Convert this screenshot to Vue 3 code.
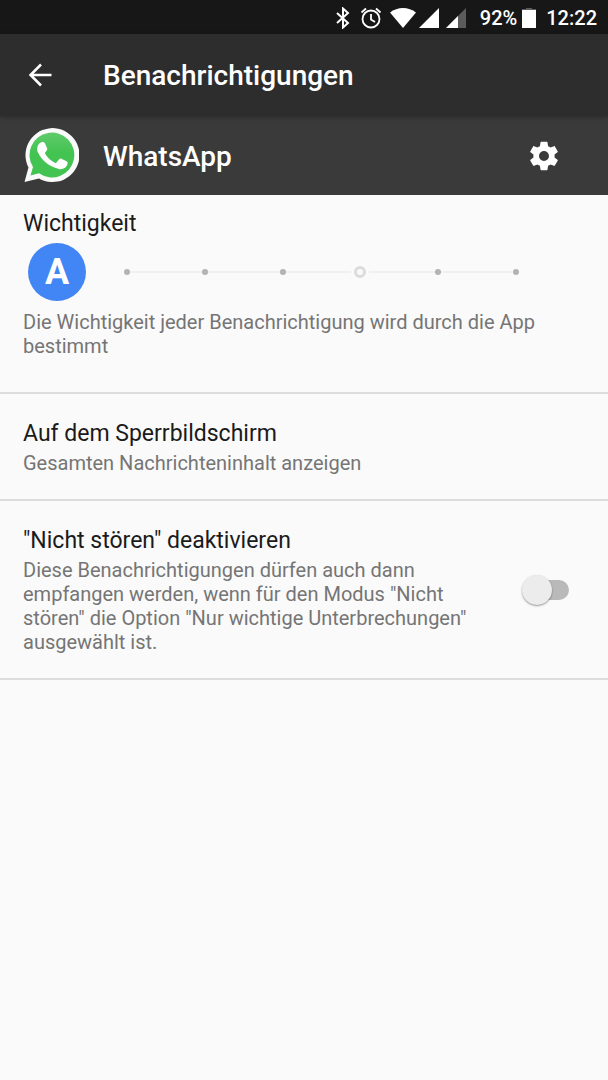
<script setup>
import { ref } from 'vue'

const importance = ref(3)
const overrideDnd = ref(false)
</script>

<template>
  <div class="screen">
    <div class="status">
      <svg class="bluetooth" width="14" height="22" viewBox="0 0 14 22" fill="none" stroke="#fff" stroke-width="2" aria-label="Bluetooth">
        <path d="M1 6l11 10-5 4.500V1.500l5 4.500L1 16" />
      </svg>
      <svg class="alarm" width="22" height="22" viewBox="0 0 22 22" fill="none" stroke="#fff" stroke-width="1.800" aria-label="Wecker">
        <circle cx="11" cy="12" r="8.500" />
        <path d="M11 7v5.500l4 2.500M1.500 5.500l4.500-4M20.500 5.500l-4.500-4" />
      </svg>
      <svg class="wifi" width="26" height="20" viewBox="0 0 26 20" fill="#fff" aria-label="WLAN">
        <path d="M0 4.500C7.500-1.500 18.500-1.500 26 4.500L13 20z" />
      </svg>
      <svg class="signal" width="20" height="20" viewBox="0 0 20 20" aria-label="Mobilfunk 1">
        <path d="M20 0v20H0z" fill="#fff" />
      </svg>
      <svg class="signal second" width="20" height="20" viewBox="0 0 20 20" aria-label="Mobilfunk 2">
        <path d="M20 0v20H0z" fill="#5b5b5b" />
        <path d="M12 8v12H0z" fill="#fff" />
      </svg>
      <span>92%</span>
      <svg class="battery" width="14" height="20" viewBox="0 0 14 20" aria-label="Akku">
        <path d="M4 0h6v1h4v3H0V1h4z" fill="#5b5b5b" />
        <path d="M0 2h14v18H0z" fill="#fff" />
      </svg>
      <time>12:22</time>
    </div>

    <header class="toolbar">
      <button class="icon-button back" type="button" aria-label="Zurück">
        <svg width="24" height="24" viewBox="0 0 24 24" fill="none" stroke="#fff" stroke-width="2.500">
          <path d="M23.500 12H3M13 1.500L2.500 12 13 22.500" />
        </svg>
      </button>
      <h1>Benachrichtigungen</h1>
    </header>

    <div class="app-row">
      <svg class="logo" width="56" height="56" viewBox="0 0 56 56" aria-hidden="true">
        <defs>
          <linearGradient id="leaf" x1="0" y1="0" x2="0" y2="1">
            <stop offset="0" stop-color="#5fca6b" />
            <stop offset="0.450" stop-color="#43c351" />
            <stop offset="1" stop-color="#43c351" />
          </linearGradient>
        </defs>
        <path d="M1.500 55l4-14.500A27 27 0 1 1 16 51.500z" fill="#fafafa" />
        <path d="M7.500 48.500l2.500-8.500A22.400 22.400 0 1 1 16 46.300z" fill="url(#leaf)" />
        <path d="M17 16c2-1.500 4-1.500 4.800 0l2.400 5.500c.4 1-.1 1.700-2.400 4.500 2.500 4.700 6 8 11 10.200l3.400-4c.7-.8 1.300-.9 2.200-.5l5.200 2.600c1 .5 1.200 1 .9 2.500-.8 4.200-5 6-8.500 5.200C25 39.500 18 32 15 25.500c-1.600-3.500-.6-7.500 2-9.500z" fill="#fff" />
      </svg>
      <h2>WhatsApp</h2>
      <button class="icon-button" type="button" aria-label="App-Einstellungen">
        <svg width="34" height="34" viewBox="0 0 24 24" fill="#fff">
          <path d="M19.430 12.980c.04-.32.07-.64.07-.98s-.03-.66-.07-.98l2.110-1.650c.19-.15.24-.42.12-.64l-2-3.460c-.12-.22-.39-.3-.61-.22l-2.490 1c-.52-.4-1.080-.73-1.690-.98l-.38-2.650C14.460 2.180 14.250 2 14 2h-4c-.25 0-.46.18-.49.42l-.38 2.650c-.61.25-1.170.59-1.690.98l-2.490-1c-.23-.09-.49 0-.61.22l-2 3.460c-.13.22-.07.49.12.64l2.110 1.650c-.04.32-.07.65-.07.98s.03.66.07.98l-2.110 1.650c-.19.15-.24.42-.12.64l2 3.460c.12.22.39.3.61.22l2.490-1c.52.4 1.080.73 1.690.98l.38 2.650c.03.24.24.42.49.42h4c.25 0 .46-.18.49-.42l.38-2.650c.61-.25 1.170-.59 1.690-.98l2.490 1c.23.09.49 0 .61-.22l2-3.460c.12-.22.07-.49-.12-.64l-2.110-1.650zM12 15.500c-1.930 0-3.500-1.570-3.500-3.500s1.570-3.500 3.500-3.500 3.500 1.570 3.500 3.500-1.570 3.500-3.500 3.500z" />
        </svg>
      </button>
    </div>

    <main>
      <section class="importance">
        <label class="title" for="importance">Wichtigkeit</label>
        <div class="control">
          <button class="auto" type="button" title="Automatisch">A</button>
          <div class="slider">
            <div class="ticks"><i v-for="n in 6" :key="n"></i></div>
            <input id="importance" v-model.number="importance" type="range" min="0" max="5" />
          </div>
        </div>
        <p>Die Wichtigkeit jeder Benachrichtigung wird durch die App bestimmt</p>
      </section>

      <section>
        <h3 class="title">Auf dem Sperrbildschirm</h3>
        <p>Gesamten Nachrichteninhalt anzeigen</p>
      </section>

      <section class="with-switch">
        <div class="text">
          <label class="title" for="dnd">"Nicht stören" deaktivieren</label>
          <p>Diese Benachrichtigungen dürfen auch dann empfangen werden, wenn für den Modus "Nicht stören" die Option "Nur wichtige Unterbrechungen" ausgewählt ist.</p>
        </div>
        <input id="dnd" v-model="overrideDnd" class="switch" type="checkbox" role="switch" />
      </section>
    </main>
  </div>
</template>

<style>
body {
  margin: 0;
  background: #fafafa;
}
</style>

<style scoped>
.screen {
  min-height: 100vh;
  background: #fafafa;
  color: #1b1b1b;
  font-family: Roboto, "Liberation Sans", sans-serif;
}

h1,
h2,
h3,
p {
  margin: 0;
}

svg {
  display: block;
  flex: none;
}

.status {
  display: flex;
  box-sizing: border-box;
  align-items: center;
  justify-content: flex-end;
  height: 34px;
  padding: 2px 11px 0 0;
  background: #171717;
  color: #fff;
  font-size: 20px;
  font-weight: 500;
  line-height: 32px;
}

.alarm {
  margin-left: 10px;
}

.wifi {
  margin-left: 8px;
}

.signal {
  margin-left: 3px;
}

.second {
  margin-left: 7px;
}

.status span {
  margin-left: 14px;
}

.battery {
  margin: 0 10px 0 5px;
}

.toolbar,
.app-row {
  display: flex;
  align-items: center;
  color: #fff;
}

.toolbar {
  position: relative;
  height: 82px;
  padding: 0 24px;
  background: #2d2d2d;
  box-shadow: 0 1px 4px rgba(0, 0, 0, 0.3);
}

.app-row {
  height: 79px;
  padding: 0 45px 0 23px;
  background: #3a3a3a;
}

.logo {
  margin-bottom: 2px;
}

h1,
h2 {
  padding-top: 2px;
  font-size: 28px;
  font-weight: 500;
  line-height: 32px;
}

h2 {
  flex: 1;
  margin-left: 24px;
}

.icon-button {
  display: grid;
  place-items: center;
  width: 38px;
  height: 48px;
  padding: 0;
  border: 0;
  background: none;
}

.back {
  width: 32px;
  margin-right: 47px;
}

section {
  padding: 24px 23px;
  border-bottom: 2px solid #dcdcdc;
}

.title {
  display: block;
  font-size: 23px;
  font-weight: 400;
  line-height: 32px;
}

p {
  padding-top: 1px;
  color: #757575;
  font-size: 20px;
  line-height: 24px;
}

.importance {
  padding: 13px 23px 34px;
}

.control {
  display: flex;
  align-items: center;
  padding: 3px 63px 8px 5px;
}

.auto {
  display: grid;
  flex: none;
  place-items: center;
  width: 58px;
  height: 58px;
  padding: 0;
  border: 0;
  border-radius: 50%;
  background: #4285f4;
  color: #fff;
  font-family: inherit;
  font-size: 36px;
  font-weight: 700;
  line-height: 40px;
}

.slider {
  display: grid;
  flex: 1;
  align-items: center;
  margin-left: 35px;
}

.slider > * {
  grid-area: 1 / 1;
}

.ticks {
  display: flex;
  justify-content: space-between;
  align-items: center;
  height: 2px;
  margin: 0 3px;
  background: #f0f0f0;
}

.ticks i {
  width: 6px;
  height: 6px;
  border-radius: 50%;
  background: #b3b3b3;
}

.slider input {
  z-index: 1;
  width: 100%;
  height: 24px;
  margin: 0;
  background: none;
  appearance: none;
}

.slider input::-webkit-slider-thumb {
  box-sizing: border-box;
  width: 12px;
  height: 12px;
  border: 3px solid #dcdcdc;
  border-radius: 50%;
  background: #fafafa;
  box-shadow: 0 0 0 3px #fafafa;
  appearance: none;
}

.with-switch {
  display: flex;
  align-items: center;
  justify-content: space-between;
}

.text {
  flex: 1;
  max-width: 464px;
}

.switch {
  display: flex;
  flex: none;
  align-items: center;
  width: 44px;
  height: 20px;
  margin: 0 16px 0 20px;
  border-radius: 10px;
  background: #b9b9b9;
  appearance: none;
}

.switch::before {
  width: 30px;
  height: 30px;
  margin-left: -3px;
  border-radius: 50%;
  background: #ececec;
  box-shadow: 0 1px 2px rgba(0, 0, 0, 0.4);
  content: "";
}

.switch:checked {
  justify-content: flex-end;
}
</style>
